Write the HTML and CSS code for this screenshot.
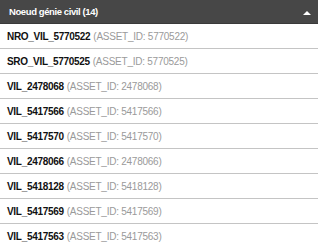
FILE: index.html
```html
<!DOCTYPE html>
<html>
<head>
<meta charset="utf-8">
<link rel="stylesheet" href="styles.css">
</head>
<body>
<div class="panel">
  <div class="panel-header">
    <span class="panel-title">Noeud génie civil (14)</span>
    <span class="caret"></span>
  </div>
  <ul class="list">
    <li class="item"><b class="name">NRO_VIL_5770522</b> <span class="meta">(ASSET_ID: 5770522)</span></li>
    <li class="item"><b class="name">SRO_VIL_5770525</b> <span class="meta">(ASSET_ID: 5770525)</span></li>
    <li class="item"><b class="name">VIL_2478068</b> <span class="meta">(ASSET_ID: 2478068)</span></li>
    <li class="item"><b class="name">VIL_5417566</b> <span class="meta">(ASSET_ID: 5417566)</span></li>
    <li class="item"><b class="name">VIL_5417570</b> <span class="meta">(ASSET_ID: 5417570)</span></li>
    <li class="item"><b class="name">VIL_2478066</b> <span class="meta">(ASSET_ID: 2478066)</span></li>
    <li class="item"><b class="name">VIL_5418128</b> <span class="meta">(ASSET_ID: 5418128)</span></li>
    <li class="item"><b class="name">VIL_5417569</b> <span class="meta">(ASSET_ID: 5417569)</span></li>
    <li class="item"><b class="name">VIL_5417563</b> <span class="meta">(ASSET_ID: 5417563)</span></li>
  </ul>
</div>
</body>
</html>
```
FILE: styles.css
```css
html, body {
  margin: 0;
  padding: 0;
  background: #ffffff;
}
body {
  font-family: "Liberation Sans", Arial, sans-serif;
  width: 318px;
  height: 246px;
  overflow: hidden;
}
.panel {
  width: 318px;
}
.panel-header {
  display: flex;
  align-items: center;
  justify-content: space-between;
  height: 24px;
  background: #474747;
  padding: 0 7px 0 9px;
  box-sizing: border-box;
  border-bottom: 1px solid #3a3a3a;
}
.panel-title {
  color: #ffffff;
  font-weight: bold;
  font-size: 9.5px;
  letter-spacing: -0.4px;
}
.caret {
  width: 0;
  height: 0;
  border-left: 4px solid transparent;
  border-right: 4px solid transparent;
  border-bottom: 4px solid #ffffff;
  margin-top: 2px;
}
.list {
  list-style: none;
  margin: 0;
  padding: 0;
}
.item {
  display: flex;
  align-items: center;
  gap: 3px;
  height: 24px;
  padding-left: 7px;
  border-bottom: 1px solid #c4c4c4;
  font-size: 10px;
  white-space: nowrap;
}
.name {
  color: #111111;
  font-weight: bold;
  letter-spacing: -0.3px;
}
.meta {
  color: #9a9a9a;
  letter-spacing: -0.25px;
}
```
